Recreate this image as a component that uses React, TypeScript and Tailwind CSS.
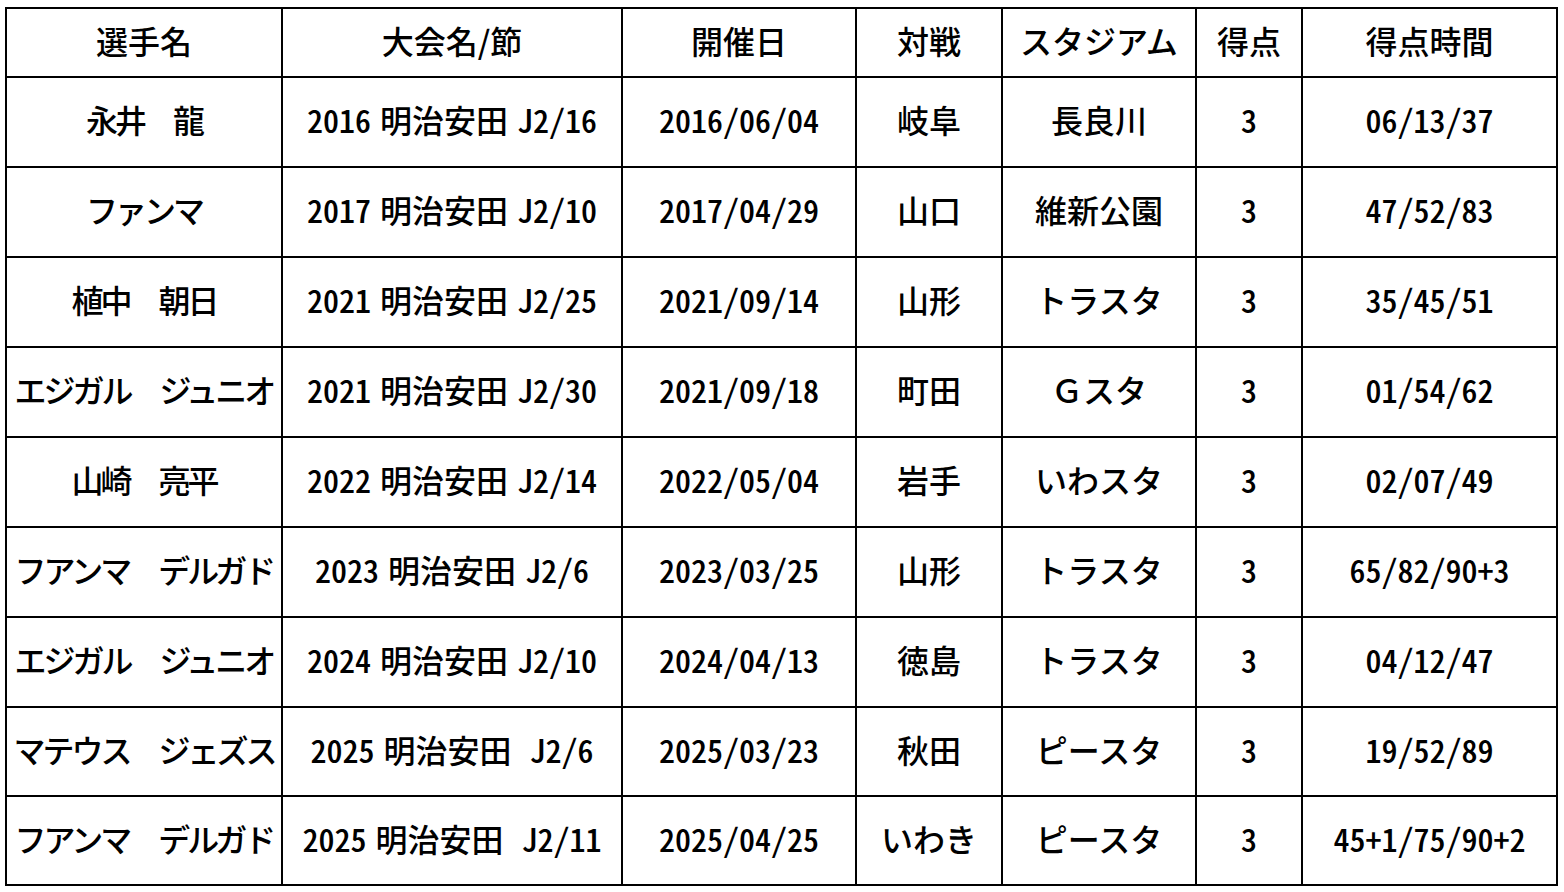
import React from "react";

type Row = [string, string, string, string, string, string, string];

const header: string[] = ["選手名", "大会名/節", "開催日", "対戦", "スタジアム", "得点", "得点時間"];

const rows: Row[] = [
  ["永井　龍", "2016 明治安田 J2/16", "2016/06/04", "岐阜", "長良川", "3", "06/13/37"],
  ["ファンマ", "2017 明治安田 J2/10", "2017/04/29", "山口", "維新公園", "3", "47/52/83"],
  ["植中　朝日", "2021 明治安田 J2/25", "2021/09/14", "山形", "トラスタ", "3", "35/45/51"],
  ["エジガル　ジュニオ", "2021 明治安田 J2/30", "2021/09/18", "町田", "Ｇスタ", "3", "01/54/62"],
  ["山崎　亮平", "2022 明治安田 J2/14", "2022/05/04", "岩手", "いわスタ", "3", "02/07/49"],
  ["フアンマ　デルガド", "2023 明治安田 J2/6", "2023/03/25", "山形", "トラスタ", "3", "65/82/90+3"],
  ["エジガル　ジュニオ", "2024 明治安田 J2/10", "2024/04/13", "徳島", "トラスタ", "3", "04/12/47"],
  ["マテウス　ジェズス", "2025 明治安田  J2/6", "2025/03/23", "秋田", "ピースタ", "3", "19/52/89"],
  ["フアンマ　デルガド", "2025 明治安田  J2/11", "2025/04/25", "いわき", "ピースタ", "3", "45+1/75/90+2"],
];

const numericCols = new Set([1, 2, 5, 6]);

function Cell({ text, col, h }: { text: string; col: number; h: string }) {
  const num = numericCols.has(col);
  let cls = "shrink-0 whitespace-pre leading-none";
  if (num) cls += " [font-feature-settings:'hwid'] [word-spacing:-7px]";
  if (col === 0) cls += " tracking-[-3px]";
  return (
    <div
      className={`flex items-center justify-center border-r-2 border-b-2 border-black pb-[6px] ${h} min-w-0`}
    >
      <span className={cls}>{text}</span>
    </div>
  );
}

export default function App() {
  const rowHeights = [
    "h-[90px]",
    "h-[90px]",
    "h-[90px]",
    "h-[90px]",
    "h-[90px]",
    "h-[90px]",
    "h-[90px]",
    "h-[89px]",
    "h-[89px]",
  ];
  return (
    <div className="w-[1564px] h-[892px] bg-white text-black pl-[5px] pt-[7px] [font-family:'Noto_Sans_CJK_JP','Noto_Sans_CJK_SC',sans-serif] text-[32px] font-medium">
      <div className="grid w-[1553px] grid-cols-[276px_340px_234px_146px_194px_106px_255px] border-l-2 border-t-2 border-black">
        {header.map((t, i) => (
          <Cell key={"h" + i} text={t} col={-1} h="h-[69px]" />
        ))}
        {rows.map((r, ri) =>
          r.map((t, ci) => <Cell key={ri + "-" + ci} text={t} col={ci} h={rowHeights[ri]} />)
        )}
      </div>
    </div>
  );
}
